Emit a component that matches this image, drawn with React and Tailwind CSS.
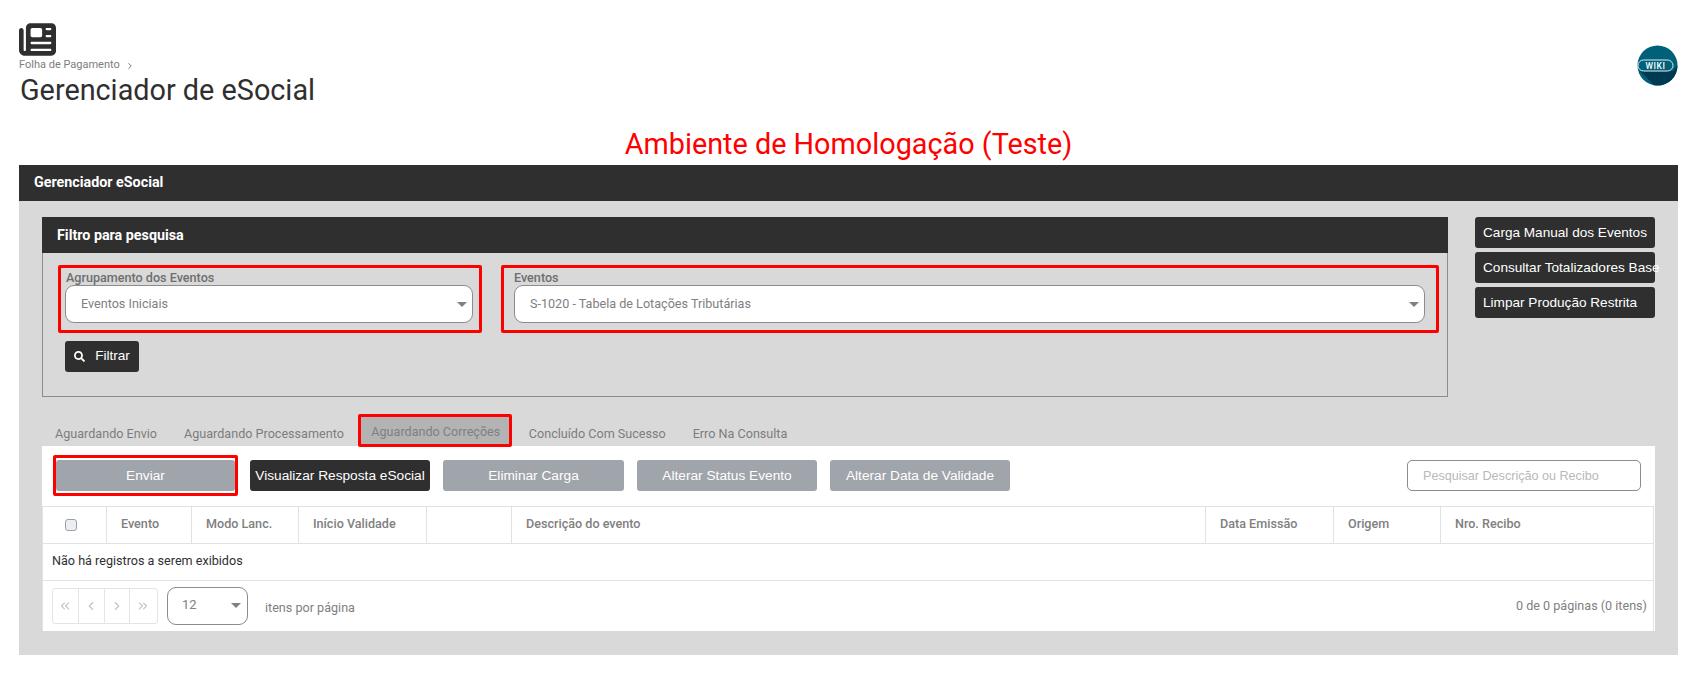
import React from "react";
import { ChevronLeft, ChevronRight, ChevronsLeft, ChevronsRight } from "lucide-react";
import { FaSearch } from "react-icons/fa";
import { FaNewspaper } from "react-icons/fa6";

const TABS = ["Aguardando Envio", "Aguardando Processamento", "Aguardando Correções", "Concluído Com Sucesso", "Erro Na Consulta"];

const COLUMNS = [
  { label: "Evento", width: "w-[85px]" },
  { label: "Modo Lanc.", width: "w-[107px]" },
  { label: "Início Validade", width: "w-[128px]" },
  { label: "", width: "w-[85px]" },
  { label: "Descrição do evento", width: "flex-1" },
  { label: "Data Emissão", width: "w-[128px]" },
  { label: "Origem", width: "w-[107px]" },
  { label: "Nro. Recibo", width: "w-[213px]" },
];

function Caret() {
  return <span className="w-0 h-0 border-x-[5px] border-x-transparent border-t-[5px] border-t-[#808080]"></span>;
}

function SelectBox({ value }) {
  return (
    <div className="h-[38px] bg-white border border-[#8c8c8c] rounded-[9px] flex items-center justify-between pl-[15px] pr-[5px] text-[12.6px] text-[#808080]">
      <span>{value}</span>
      <Caret />
    </div>
  );
}

function GrayButton({ children, width }) {
  return (
    <button className={`h-[31px] pt-[1px] rounded-[3px] bg-[#a0a4ab] text-white text-[13.7px] font-['Liberation_Sans',sans-serif] ${width}`}>
      {children}
    </button>
  );
}

function SideButton({ children }) {
  return (
    <button className="h-[31px] pt-[1px] w-[180px] rounded-[3px] bg-[#2f2f2f] text-white text-[13.6px] text-left pl-[8px] whitespace-nowrap font-['Liberation_Sans',sans-serif]">
      {children}
    </button>
  );
}

export default function App() {
  return (
    <div className="w-[1690px] h-[675px] bg-white overflow-hidden pt-[24px] pl-[19px] pr-[12px] font-['Roboto',sans-serif]">
      {/* Cabeçalho */}
      <div className="flex justify-between items-start h-[85px]">
        <div>
          <FaNewspaper className="text-[#2f2f2f] w-[37px] h-[37px] -my-[3px]" />
          <div className="flex items-center h-[13px] mt-[4px] text-[11px] text-[#7d7d7d]">
            Folha de Pagamento
            <ChevronRight size={10} className="ml-[5px] text-[#5f5f5f]" />
          </div>
          <h1 className="text-[28.8px] leading-[36px] pl-[1px] text-[#2f2f2f]">Gerenciador de eSocial</h1>
        </div>
        <svg width="41" height="41" viewBox="0 0 41 41" className="mt-[21px]">
          <defs>
            <clipPath id="wikiClip">
              <circle cx="20.5" cy="20.5" r="20" />
            </clipPath>
          </defs>
          <circle cx="20.5" cy="20.5" r="20" fill="#00607a" />
          <path d="M3 26 L36 26 L41 20 L41 41 L18 41 Z" fill="#003a52" clipPath="url(#wikiClip)" />
          <rect x="1" y="15" width="35" height="11" rx="5.5" fill="#00607a" stroke="#e6eef1" strokeWidth="1" />
          <text x="18.5" y="23.5" textAnchor="middle" fontSize="8.5" fontWeight="500" letterSpacing="0.6" fill="#ffffff" fontFamily="Roboto, sans-serif">WIKI</text>
        </svg>
      </div>

      <div className="h-[56px] pt-[15px] flex items-center justify-center text-[28.8px] text-[#ff0000]">
        Ambiente de Homologação (Teste)
      </div>

      {/* Painel principal */}
      <div className="h-[36px] bg-[#2f2f2f] text-white text-[14.3px] font-bold flex items-center pl-[15px]">
        Gerenciador eSocial
      </div>
      <div className="h-[454px] bg-[#d9d9d9] pt-[16px] px-[23px]">
        <div className="flex items-start">
          <div className="w-[1406px] h-[180px] border border-[#8c8c8c] border-t-0">
            <div className="h-[36px] pt-[1px] -mx-px bg-[#2f2f2f] text-white text-[14.3px] font-bold flex items-center pl-[15px]">
              Filtro para pesquisa
            </div>
            <div className="flex pt-[12px] pl-[15px] gap-[19px]">
              <div className="w-[424px] h-[68px] border-[3px] border-[#ff0000] rounded-[2px] pl-[4px] pr-[6px] pt-[3px]">
                <div className="h-[14px] leading-[14px] pl-[1px] text-[12.6px] font-medium text-[#6e6e6e]">Agrupamento dos Eventos</div>
                <SelectBox value="Eventos Iniciais" />
              </div>
              <div className="w-[938px] h-[68px] border-[3px] border-[#ff0000] rounded-[2px] pl-[10px] pr-[11px] pt-[3px]">
                <div className="h-[14px] leading-[14px] text-[12.6px] font-medium text-[#6e6e6e]">Eventos</div>
                <SelectBox value="S-1020 - Tabela de Lotações Tributárias" />
              </div>
            </div>
            <button className="ml-[22px] mt-[8px] h-[31px] w-[74px] rounded-[3px] bg-[#2f2f2f] text-white text-[13.6px] flex items-center justify-center gap-[10px] font-['Liberation_Sans',sans-serif]">
              <FaSearch size={11} />
              Filtrar
            </button>
          </div>
          <div className="ml-[27px] flex flex-col gap-[4px]">
            <SideButton>Carga Manual dos Eventos</SideButton>
            <SideButton>Consultar Totalizadores Base</SideButton>
            <SideButton>Limpar Produção Restrita</SideButton>
          </div>
        </div>

        {/* Abas */}
        <div className="flex items-end gap-[1px] h-[49px] text-[12.6px] text-[#7d7d7d]">
          {TABS.map((tab, idx) =>
            idx === 2 ? (
              <div key={tab} className="relative h-[33px] mb-[-1px] mr-[3px] pl-[10.5px] pr-[8.5px] pt-[4px] flex items-center border-[3px] border-[#ff0000] rounded-[2px] bg-[#b3b3b3] text-[#808080]">
                {tab}
              </div>
            ) : (
              <div key={tab} className="h-[28px] px-[13px] pt-[4px] flex items-center">
                {tab}
              </div>
            )
          )}
        </div>

        {/* Conteúdo da aba */}
        <div className="w-[1613px] h-[185px] bg-white">
          <div className="h-[60px] flex items-center pb-[1px] pl-[11px] pr-[14px] gap-[13px]">
            <div className="w-[185px] h-[41px] border-[3px] border-[#ff0000] rounded-[2px] flex items-center justify-center mr-[-1px]">
              <GrayButton width="w-[179px]">Enviar</GrayButton>
            </div>
            <button className="h-[31px] pt-[1px] w-[180px] rounded-[3px] bg-[#2f2f2f] text-white text-[13.7px] whitespace-nowrap font-['Liberation_Sans',sans-serif]">
              Visualizar Resposta eSocial
            </button>
            <GrayButton width="w-[181px]">Eliminar Carga</GrayButton>
            <GrayButton width="w-[180px]">Alterar Status Evento</GrayButton>
            <GrayButton width="w-[180px]">Alterar Data de Validade</GrayButton>
            <input
              readOnly
              placeholder="Pesquisar Descrição ou Recibo"
              className="ml-auto w-[234px] h-[31px] border border-[#8c8c8c] rounded-[5px] pl-[15px] text-[12.6px] outline-none placeholder:text-[#b9b9b9] font-['Liberation_Sans',sans-serif]"
            />
          </div>

          <div className="w-[1612px] border-x border-[#dfe2e8]">
            <div className="flex h-[38px] border-y border-[#dfe2e8] text-[12.6px] font-medium text-[#808080]">
              <div className="w-[63px] flex items-center justify-center pr-[8px]">
                <span className="w-[12px] h-[12px] rounded-[3px] border border-[#9aa0a8] bg-[#eceef2]"></span>
              </div>
              {COLUMNS.map((col) => (
                <div key={col.label || "vazio"} className={`${col.width} border-l border-[#dfe2e8] pl-[14px] pb-[2px] flex items-center`}>
                  {col.label}
                </div>
              ))}
            </div>
            <div className="h-[37px] flex items-center pl-[9px] pb-[2px] text-[12.6px] text-[#2f2f2f] border-b border-[#dfe2e8]">
              Não há registros a serem exibidos
            </div>
            <div className="h-[50px] flex items-center pl-[9px] pr-[6px] text-[12.6px] text-[#808080]">
              <div className="flex h-[36px] w-[106px] pr-[2px] border border-[#e2e4e8] rounded-[3px] text-[#c4c4c4]">
                <span className="flex-1 flex items-center justify-center"><ChevronsLeft size={14} /></span>
                <span className="flex-1 flex items-center justify-center border-l border-[#e2e4e8]"><ChevronLeft size={14} /></span>
                <span className="flex-1 flex items-center justify-center border-l border-[#e2e4e8]"><ChevronRight size={14} /></span>
                <span className="flex-1 flex items-center justify-center border-l border-[#e2e4e8]"><ChevronsRight size={14} /></span>
              </div>
              <div className="ml-[9px] w-[81px] h-[38px] pb-[2px] border border-[#8c8c8c] rounded-[9px] flex items-center justify-between pl-[14px] pr-[6px] text-[13px]">
                12
                <Caret />
              </div>
              <span className="ml-[17px] mt-[4px]">itens por página</span>
              <span className="ml-auto">0 de 0 páginas (0 itens)</span>
            </div>
          </div>
        </div>
      </div>
    </div>
  );
}
